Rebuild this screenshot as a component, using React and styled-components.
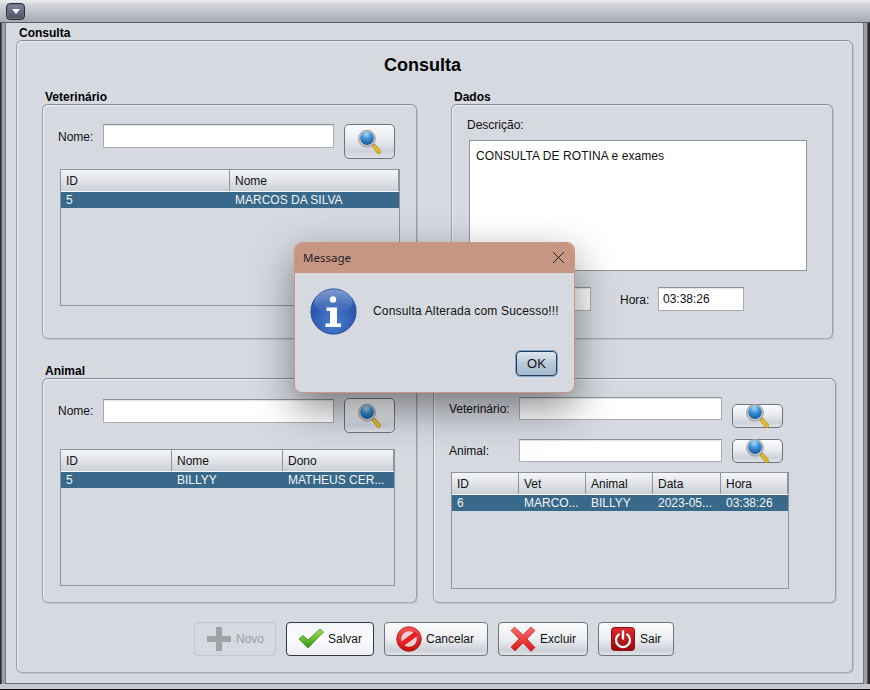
import React from "react";
import styled, { createGlobalStyle } from "styled-components";

const Global = createGlobalStyle`
  html, body { margin: 0; padding: 0; background: #000; }
  body { font-family: "Liberation Sans", Arial, sans-serif; font-size: 12px; color: #000; }
  * { box-sizing: border-box; }
`;

const Win = styled.div`
  position: relative;
  width: 870px; height: 690px; overflow: hidden;
  display: flex; flex-direction: column;
  background: #c4c7ce;
  border-bottom: 1px solid #111;
`;
const TitleBar = styled.div`
  height: 23px; flex: none;
  padding: 3px 0 0 6px;
  background: linear-gradient(#eeeef1, #d4d6db 20%, #a6aab4);
  border-bottom: 1px solid #5b5f68;
`;
const MenuBtn = styled.div`
  width: 19px; height: 17px; border-radius: 4px;
  border: 1px solid #2c2f3a;
  background: linear-gradient(#82879c, #4a4e62);
  box-shadow: inset 0 0 0 1px #6a6e82;
  display: flex; align-items: center; justify-content: center;
  &::after { content: ""; border: 4px solid transparent; border-top: 5px solid #fff; border-bottom: 0; }
`;
const WinBody = styled.div`
  flex: 1; min-height: 0;
  margin: 0 6px 5px 5px;
  padding: 3px 10px 10px 10px;
  background: #d6d9e0;
  border-left: 1px solid #777b84;
  border-right: 1px solid #777b84;
  border-bottom: 1px solid #696d76;
  box-shadow: -3px 0 0 #9b9ea6, -4px 0 0 #555, -5px 0 0 #2a2a2a, 3px 0 0 #9b9ea6, 4px 0 0 #555, 5px 0 0 #2a2a2a, 6px 0 0 #2a2a2a;
  display: flex; flex-direction: column;
`;
const GroupTitle = styled.div`
  font-weight: bold; font-size: 12px; line-height: 14px; height: 14px;
  margin-left: 3px;
`;
const Group = styled.section`
  display: flex; flex-direction: column;
  width: ${p => p.$w}px;
  flex: none;
  min-height: 0;
`;
const GroupFrame = styled.div`
  flex: 1; min-height: 0;
  border: 1px solid #999da5;
  border-top-color: #868a93;
  border-bottom-color: #a5a8af;
  border-radius: 6px;
  box-shadow: inset 1px 1px 0 #eef0f3, 1px 1px 0 #bfc2c9;
`;
const MainFrame = styled(GroupFrame)`
  display: flex; flex-direction: column;
  padding: 13px 18px 16px 25px;
`;
const Heading = styled.h1`
  margin: 0 0 14px; height: 22px;
  font-size: 18px; line-height: 22px; font-weight: bold; text-align: center;
  padding-right: 31px;
`;
const Row = styled.div`
  display: flex; height: ${p => p.$h}px; flex: none;
  margin-bottom: ${p => p.$mb || 0}px;
`;
const Spacer = styled.div`width: ${p => p.$w}px; flex: none;`;
const PickFrame = styled(GroupFrame)`
  padding: ${p => p.$pad};
`;
const SearchLine = styled.div`
  display: flex; align-items: flex-start;
  height: 35px; margin-bottom: ${p => p.$mb}px;
`;
const Label = styled.label`
  display: inline-block;
  font-size: 12px; line-height: 14px; color: #111;
  width: ${p => p.$w ? p.$w + "px" : "auto"};
  flex: none;
  margin-top: ${p => p.$top || 0}px;
`;
const Field = styled.div`
  flex: none;
  width: ${p => p.$w}px; height: ${p => p.$h || 24}px;
  margin-top: ${p => p.$top || 0}px;
  margin-right: ${p => p.$mr || 0}px;
  background: #fff;
  border: 1px solid #a9acb3;
  border-top-color: #8d9098;
  font-size: 12px; line-height: 22px; padding: 0 4px; color: #111;
  box-shadow: inset 0 1px 1px #e4e5e6;
`;
const Area = styled(Field)`
  line-height: 14px; padding: 8px 6px;
  margin-left: 2px;
  border-color: #8f939b;
  letter-spacing: .07px;
  box-shadow: none;
`;
const IconBtn = styled.button`
  flex: none; padding: 0 1px 0 0;
  width: 51px; height: ${p => p.$h}px;
  margin-top: ${p => p.$top || 0}px;
  border: 1px solid #6f737b; border-radius: 5px;
  background: linear-gradient(#fafbfc, #e9ebef 45%, #cfd2d9 80%, #dfe1e6);
  display: flex; align-items: center; justify-content: center;
`;
const Table = styled.div`
  flex: none;
  width: ${p => p.$w}px; height: ${p => p.$h}px;
  margin-left: ${p => p.$ml || 0}px;
  border: 1px solid #8f939b;
  background: #d6d9e0;
  display: flex; flex-direction: column;
`;
const THead = styled.div`
  display: flex; height: 22px; flex: none;
  background: linear-gradient(#f4f5f7, #e1e3e8 50%, #cdd0d7);
  border-bottom: 1px solid #f6f7f9;
`;
const TH = styled.div`
  width: ${p => p.$w}px; flex: none;
  padding-left: 5px;
  font-size: 12px; line-height: 23px; color: #111;
  border-right: 1px solid #8f939b;
`;
const TR = styled.div`
  display: flex; height: 16px; flex: none;
  background: #39698a;
`;
const TD = styled.div`
  width: ${p => p.$w}px; flex: none;
  padding-left: 5px;
  font-size: 12px; line-height: 17px; color: #f2f4f6;
  white-space: nowrap; overflow: hidden;
`;
const Toolbar = styled.div`
  display: flex; gap: 10px; height: 34px; flex: none;
  margin-top: 19px; padding-left: 152px;
`;
const ActionBtn = styled.button`
  flex: none;
  width: ${p => p.$w}px; height: 34px; padding: 0 0 0 ${p => p.$pl || 4}px;
  display: flex; align-items: center; gap: ${p => p.$gap ?? 4}px;
  font: 12px "Liberation Sans", Arial, sans-serif;
  color: ${p => p.disabled ? "#9b9ea5" : "#111"};
  border-radius: 4px;
  border: 1px solid ${p => p.disabled ? "#c2c5cb" : p.$focus ? "#33363c" : "#6f737b"};
  background: ${p => p.disabled ? "#d6d9e0" : p.$focus
    ? "linear-gradient(#f4f5f8, #fbfbfd 50%, #eef0f5)"
    : "linear-gradient(#fafbfc, #eceef1 50%, #ced1d8 85%, #e0e2e7)"};
`;
const Dialog = styled.div`
  position: absolute; left: 294px; top: 242px;
  width: 281px; height: 151px;
  border: 1px solid #c99985; border-radius: 8px;
  background: #d6d9e0;
  box-shadow: 0 15px 40px rgba(0,0,0,.45);
  display: flex; flex-direction: column;
  overflow: hidden;
`;
const DialogHead = styled.div`
  height: 30px; flex: none;
  background: #c79683;
  display: flex; align-items: center; justify-content: space-between;
  padding: 0 9px 2px 8px;
  font: 11.5px "Noto Sans", "Open Sans", sans-serif; color: #222;
`;
const DialogMain = styled.div`
  display: flex; align-items: flex-start;
  padding: 15px 0 0 15px; height: 78px; flex: none;
`;
const DialogText = styled.p`
  margin: 16px 0 0 16px;
  font-size: 12px; line-height: 14px; color: #111; letter-spacing: .18px; white-space: nowrap;
`;
const DialogFoot = styled.div`
  display: flex; justify-content: flex-end; padding-right: 17px;
`;
const OkBtn = styled.button`
  width: 41px; height: 25px; padding: 0;
  font: 13px "Liberation Sans", Arial, sans-serif; color: #111;
  border: 1px solid #223c5c; border-radius: 4px;
  outline: 1px solid #7ea6cc;
  background: linear-gradient(#dde6ee, #b5c6d6 55%, #a5bacd);
`;

const Magnifier = () => (
  <svg width="23" height="24" viewBox="0 0 23 24">
    <defs>
      <radialGradient id="lens" cx=".45" cy=".2" r=".85">
        <stop offset="0" stopColor="#a9daf7" /><stop offset=".45" stopColor="#3a8fd2" /><stop offset="1" stopColor="#14548f" />
      </radialGradient>
    </defs>
    <path d="M12 14l2.2-2.2 2.6 2.6-2.2 2.2z" fill="#8c8f94" />
    <path d="M14.2 16.5l2.6-2.6 5.4 6.4a2 2 0 0 1-3 2.8z" fill="#e0b92a" stroke="#a48517" strokeWidth=".6" />
    <circle cx="9" cy="8.7" r="8.4" fill="#c3c6cb" stroke="#8b8f96" strokeWidth=".8" />
    <circle cx="9" cy="8.2" r="6.7" fill="url(#lens)" />
  </svg>
);
const PlusIcon = () => (
  <svg width="26" height="26" viewBox="0 0 26 26">
    <path d="M10 1h6v9h9v6h-9v9h-6v-9H1v-6h9z" fill="#a0a2a6" />
  </svg>
);
const CheckIcon = () => (
  <svg width="26" height="22" viewBox="0 0 26 22">
    <defs><linearGradient id="chk" x1="0" y1="0" x2="0" y2="1"><stop offset="0" stopColor="#a5e04a" /><stop offset="1" stopColor="#2b9a17" /></linearGradient></defs>
    <path d="M1 11l4-3.5 5 4.5L22 1l3.5 3L10 20z" fill="url(#chk)" stroke="#3b8d1e" strokeWidth=".8" strokeLinejoin="round" />
  </svg>
);
const BanIcon = () => (
  <svg width="26" height="26" viewBox="0 0 26 26">
    <defs><linearGradient id="ban" x1="0" y1="0" x2="0" y2="1"><stop offset="0" stopColor="#f55" /><stop offset="1" stopColor="#c20b0b" /></linearGradient></defs>
    <circle cx="13" cy="13" r="12.3" fill="url(#ban)" stroke="#a71010" strokeWidth=".7" />
    <circle cx="13" cy="13" r="7.8" fill="#e9d3d5" />
    <path d="M4 16.5L19 5.5l3 4L7 20.5z" fill="#e52020" />
  </svg>
);
const CrossIcon = () => (
  <svg width="26" height="26" viewBox="0 0 26 26">
    <defs><linearGradient id="crs" x1="0" y1="0" x2="0" y2="1"><stop offset="0" stopColor="#ff6a6a" /><stop offset="1" stopColor="#d81616" /></linearGradient></defs>
    <path d="M1 4.5L4.5 1 13 9 21 1l4 3.5-8 8.5 8 8.5-4 4-8-8.5L5 25l-4-4 8-8z" fill="url(#crs)" stroke="#b51515" strokeWidth=".6" />
  </svg>
);
const PowerIcon = () => (
  <svg width="24" height="24" viewBox="0 0 24 24">
    <defs><linearGradient id="pwr" x1="0" y1="0" x2="0" y2="1"><stop offset="0" stopColor="#e02b2b" /><stop offset="1" stopColor="#950a0a" /></linearGradient></defs>
    <rect x=".5" y=".5" width="23" height="23" rx="3" fill="url(#pwr)" stroke="#8b1111" />
    <path d="M7.8 7.5a7 7 0 1 0 8.4 0" fill="none" stroke="#fff" strokeWidth="2.2" strokeLinecap="round" />
    <path d="M12 4.5v7" stroke="#fff" strokeWidth="2.4" strokeLinecap="round" />
  </svg>
);
const InfoIcon = () => (
  <svg width="47" height="47" viewBox="0 0 47 47">
    <defs>
      <radialGradient id="inf" cx=".5" cy=".75" r=".8"><stop offset="0" stopColor="#4a7fd0" /><stop offset=".6" stopColor="#2c59ae" /><stop offset="1" stopColor="#3a68ba" /></radialGradient>
      <linearGradient id="inf2" x1="0" y1="0" x2="0" y2="1"><stop offset="0" stopColor="#fff" stopOpacity=".35" /><stop offset="1" stopColor="#fff" stopOpacity="0" /></linearGradient>
    </defs>
    <circle cx="23.5" cy="23.5" r="22.6" fill="url(#inf)" stroke="#2a4f97" strokeWidth="1" />
    <ellipse cx="23.5" cy="14" rx="19" ry="12.5" fill="url(#inf2)" />
    <circle cx="23" cy="11.5" r="3.2" fill="#fff" />
    <path d="M16.5 19.5h10.5v16h4v3.5H15.5v-3.5h4.5v-12.5h-3.5z" fill="#fff" />
  </svg>
);
const CloseX = () => (
  <svg width="13" height="13" viewBox="0 0 13 13">
    <path d="M1 1l11 11M12 1L1 12" stroke="#222" strokeWidth="1" fill="none" />
  </svg>
);

const DataTable = ({ w, h, ml, cols, row }) => (
  <Table $w={w} $h={h} $ml={ml}>
    <THead>{cols.map(([t, cw]) => <TH key={t} $w={cw}>{t}</TH>)}</THead>
    <TR>{cols.map(([t, cw], i) => <TD key={t} $w={cw}>{row[i]}</TD>)}</TR>
  </Table>
);

export default function App() {
  return (
    <Win>
      <Global />
      <TitleBar><MenuBtn /></TitleBar>
      <WinBody>
        <GroupTitle>Consulta</GroupTitle>
        <MainFrame>
          <Heading>Consulta</Heading>
          <Row $h={249} $mb={25}>
            <Group $w={375}>
              <GroupTitle>Veterinário</GroupTitle>
              <PickFrame $pad="19px 0 0 15px">
                <SearchLine $mb={10}>
                  <Label $w={45} $top={6}>Nome:</Label>
                  <Field $w={231} $mr={10} />
                  <IconBtn $h={35}><Magnifier /></IconBtn>
                </SearchLine>
                <DataTable w={340} h={137} ml={2} cols={[["ID", 169], ["Nome", 169]]} row={["5", "MARCOS DA SILVA"]} />
              </PickFrame>
            </Group>
            <Spacer $w={34} />
            <Group $w={382}>
              <GroupTitle>Dados</GroupTitle>
              <PickFrame $pad="13px 0 0 15px">
                <Label>Descrição:</Label>
                <Area $w={338} $h={131} $top={8}>CONSULTA DE ROTINA e exames</Area>
                <Row $h={24}>
                  <Spacer $w={38} />
                  <Field $w={86} $top={16} />
                  <Spacer $w={29} />
                  <Label $w={38} $top={22}>Hora:</Label>
                  <Field $w={86} $top={16}>03:38:26</Field>
                </Row>
              </PickFrame>
            </Group>
          </Row>
          <Row $h={239}>
            <Group $w={375}>
              <GroupTitle>Animal</GroupTitle>
              <PickFrame $pad="19px 0 0 15px">
                <SearchLine $mb={16}>
                  <Label $w={45} $top={6}>Nome:</Label>
                  <Field $w={231} $mr={10} $top={1} />
                  <IconBtn $h={35}><Magnifier /></IconBtn>
                </SearchLine>
                <DataTable w={335} h={137} ml={2} cols={[["ID", 111], ["Nome", 111], ["Dono", 111]]} row={["5", "BILLYY", "MATHEUS CER..."]} />
              </PickFrame>
            </Group>
            <Spacer $w={16} />
            <Group $w={403}>
              <GroupTitle>&nbsp;</GroupTitle>
              <PickFrame $pad="18px 0 0 15px">
                <Row $h={42}>
                  <Label $w={70} $top={5}>Veterinário:</Label>
                  <Field $w={203} $h={23} $mr={10} />
                  <IconBtn $h={24} $top={7}><Magnifier /></IconBtn>
                </Row>
                <Row $h={33}>
                  <Label $w={70} $top={5}>Animal:</Label>
                  <Field $w={203} $h={23} $mr={10} />
                  <IconBtn $h={24}><Magnifier /></IconBtn>
                </Row>
                <DataTable w={338} h={117} ml={2} cols={[["ID", 67], ["Vet", 67], ["Animal", 67], ["Data", 68], ["Hora", 67]]} row={["6", "MARCO...", "BILLYY", "2023-05...", "03:38:26"]} />
              </PickFrame>
            </Group>
          </Row>
          <Toolbar>
            <ActionBtn $w={82} $pl={11} disabled><PlusIcon /> Novo</ActionBtn>
            <ActionBtn $w={88} $pl={11} $focus><CheckIcon /> Salvar</ActionBtn>
            <ActionBtn $w={104} $pl={11} $gap={4}><BanIcon /> Cancelar</ActionBtn>
            <ActionBtn $w={90} $pl={11} $gap={4}><CrossIcon /> Excluir</ActionBtn>
            <ActionBtn $w={76} $pl={12} $gap={5}><PowerIcon /> Sair</ActionBtn>
          </Toolbar>
        </MainFrame>
      </WinBody>
      <Dialog role="dialog">
        <DialogHead>Message<CloseX /></DialogHead>
        <DialogMain>
          <InfoIcon />
          <DialogText>Consulta Alterada com Sucesso!!!</DialogText>
        </DialogMain>
        <DialogFoot><OkBtn>OK</OkBtn></DialogFoot>
      </Dialog>
    </Win>
  );
}
